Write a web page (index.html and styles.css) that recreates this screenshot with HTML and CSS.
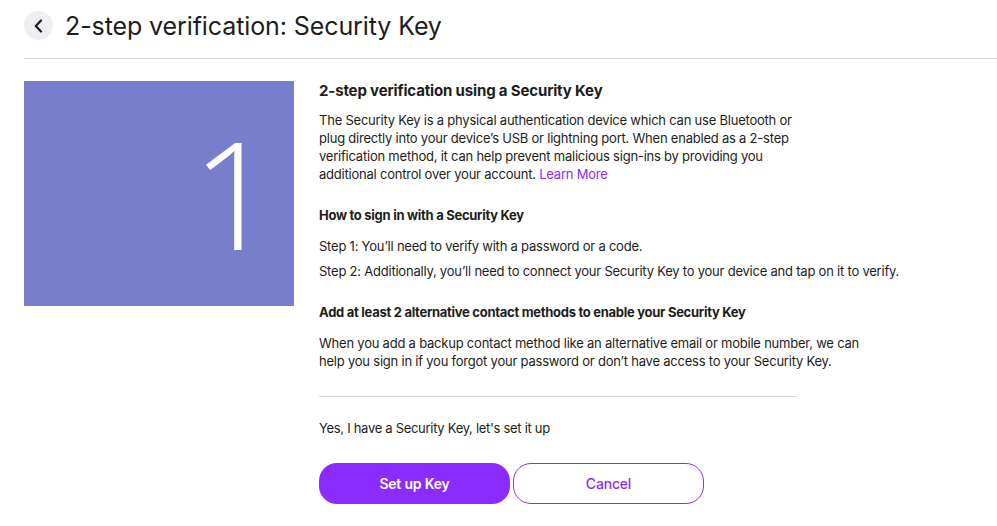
FILE: index.html
```html
<!DOCTYPE html>
<html lang="en">
<head>
<meta charset="utf-8">
<title>2-step verification: Security Key</title>
<link rel="stylesheet" href="styles.css">
</head>
<body>
<header class="top">
  <button class="back" aria-label="Back">
    <svg width="14" height="14" viewBox="0 0 14 14"><path d="M9 1.5 L3.8 7 L9 12.5" fill="none" stroke="#1d1d1b" stroke-width="2.2" stroke-linecap="round" stroke-linejoin="round"/></svg>
  </button>
  <h1 class="title">2-step verification: Security Key</h1>
</header>
<main class="content">
  <div class="hero"><span class="hero-num">1</span></div>
  <section class="info">
    <h2 class="h2">2-step verification using a Security Key</h2>
    <p class="para">The Security Key is a physical authentication device which can use Bluetooth or plug directly into your device’s USB or lightning port. When enabled as a 2-step verification method, it can help prevent malicious sign-ins by providing you additional control over your account. <a class="link" href="#">Learn More</a></p>
    <h3 class="h3">How to sign in with a Security Key</h3>
    <p class="step">Step 1: You’ll need to verify with a password or a code.</p>
    <p class="step">Step 2: Additionally, you’ll need to connect your Security Key to your device and tap on it to verify.</p>
    <h3 class="h3 h3-gap">Add at least 2 alternative contact methods to enable your Security Key</h3>
    <p class="para para-narrow">When you add a backup contact method like an alternative email or mobile number, we can help you sign in if you forgot your password or don’t have access to your Security Key.</p>
    <hr class="rule">
    <p class="confirm">Yes, I have a Security Key, let's set it up</p>
    <div class="actions">
      <button class="btn btn-primary">Set up Key</button>
      <button class="btn btn-outline">Cancel</button>
    </div>
  </section>
</main>
</body>
</html>
```
FILE: styles.css
```css
* { box-sizing: border-box; }
body {
  margin: 0;
  background: #fff;
  color: #1d1d1b;
  font-family: Inter, "Noto Sans", sans-serif;
}
.top {
  display: flex;
  align-items: center;
  gap: 12px;
  margin-left: 24px;
  height: 59px;
  padding-bottom: 7px;
  border-bottom: 1px solid #d9d9d9;
}
.back {
  width: 29px;
  height: 29px;
  border-radius: 50%;
  border: 0;
  background: #efeff3;
  display: flex;
  align-items: center;
  justify-content: center;
  padding: 0;
}
.title {
  margin: 0;
  font-size: 25px;
  font-weight: 400;
  letter-spacing: -0.1px;
  color: #1d1d1b;
}
.content {
  display: flex;
  gap: 25px;
  padding: 22px 24px 0 24px;
}
.hero {
  flex: none;
  width: 270px;
  height: 225px;
  background: #787ecc;
  display: flex;
  justify-content: flex-end;
  align-items: center;
  padding-right: 17px;
}
.hero-num {
  color: #fff;
  font-family: "Open Sans", sans-serif;
  font-weight: 300;
  font-size: 150px;
  line-height: 1;
  margin-top: -4px;
}
.info {
  width: 610px;
}
.h2 {
  margin: 0 0 10px 0;
  font-size: 15px;
  font-weight: 700;
  line-height: 20px;
  letter-spacing: -0.15px;
}
.para {
  margin: 0;
  width: 490px;
  font-size: 13px;
  line-height: 18px;
  letter-spacing: -0.22px;
}
.para-narrow { width: 555px; }
.link { color: #8a2cff; text-decoration: none; }
.h3 {
  margin: 23px 0 13px 0;
  font-size: 13px;
  font-weight: 700;
  line-height: 18px;
  letter-spacing: -0.28px;
}
.h3-gap { margin-top: 23px; margin-bottom: 13px; }
.step {
  margin: 0 0 7px 0;
  font-size: 13px;
  line-height: 18px;
  letter-spacing: -0.22px;
}
.rule {
  margin: 26px 0 0 0;
  width: 478px;
  border: 0;
  border-top: 1px solid #d9d9d9;
}
.confirm {
  margin: 22px 0 0 0;
  font-size: 13px;
  line-height: 18px;
  letter-spacing: -0.3px;
}
.actions {
  display: flex;
  gap: 3px;
  margin-top: 26px;
}
.btn {
  width: 191px;
  height: 41px;
  border-radius: 18px;
  font-family: Inter, sans-serif;
  font-size: 14px;
  font-weight: 600;
  letter-spacing: -0.2px;
}
.btn-primary {
  background: #8a2cff;
  color: #fff;
  border: 0;
}
.btn-outline {
  background: #fff;
  color: #8a2cff;
  border: 1px solid #8a2cff;
  font-weight: 500;
}
```
